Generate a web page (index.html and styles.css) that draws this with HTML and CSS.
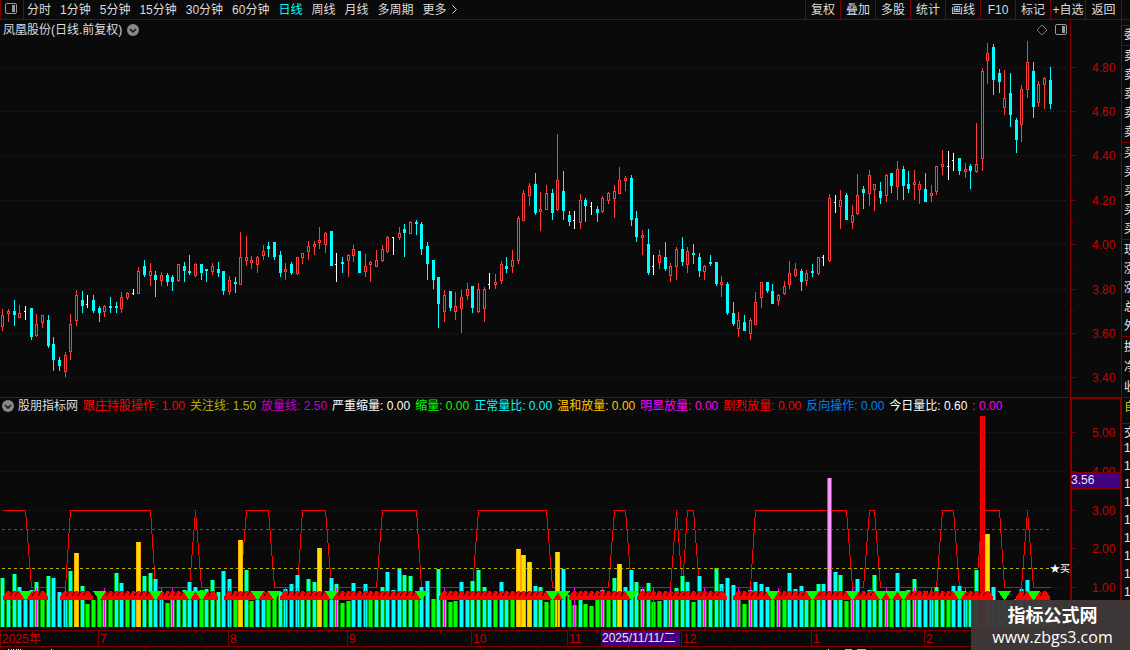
FILE: index.html
```
<!DOCTYPE html>
<html lang="zh-CN">
  <head>
    <meta charset="utf-8">
    <meta name="viewport" content="width=device-width, initial-scale=1">
    <title>凤凰股份</title>
    <link rel="stylesheet" href="styles.css">
  </head>
  <body>
    <header class="toolbar">
      <button class="panel-btn" aria-label="面板">
        <svg width="13" height="11"><rect x="0.5" y="0.5" width="11" height="10" rx="1.5" fill="none" stroke="#999"/><rect x="7" y="2" width="3" height="7" fill="#999"/></svg>
      </button>
      <nav class="periods">
        <button>分时</button>
        <button>1分钟</button>
        <button>5分钟</button>
        <button>15分钟</button>
        <button>30分钟</button>
        <button>60分钟</button>
        <button class="active">日线</button>
        <button>周线</button>
        <button>月线</button>
        <button>多周期</button>
        <button>更多<svg width="7" height="9"><path d="M1.5 0.5 L5.5 4.5 L1.5 8.5" fill="none" stroke="#ddd"/></svg></button>
      </nav>
      <div class="tools">
        <button>复权</button>
        <button>叠加</button>
        <button>多股</button>
        <button>统计</button>
        <button>画线</button>
        <button class="wide">F10</button>
        <button>标记</button>
        <button>+自选</button>
        <button>返回</button>
      </div>
    </header>

    <main>
      <section class="pane">
        <div class="title">
          <span>凤凰股份(日线.前复权)</span>
          <svg class="chev" width="12" height="12"><circle cx="6" cy="6" r="6" fill="#888"/><path d="M3 5 L6 8 L9 5" fill="none" stroke="#111" stroke-width="1.5"/></svg>
          <svg class="pane-icons" width="30" height="12">
            <path d="M5 1 L10 6 L5 11 L0 6 Z" fill="none" stroke="#777"/>
            <rect x="18.5" y="0.5" width="11" height="10" rx="1.5" fill="none" stroke="#999"/>
            <rect x="25" y="2" width="3" height="7" fill="#999"/>
          </svg>
        </div>
        <svg id="kline" class="kline"></svg>
      </section>
      <svg id="priceAxis" class="price-axis"></svg>

      <section class="pane volume">
        <div class="legend">
          <svg class="chev" width="12" height="12"><circle cx="6" cy="6" r="6" fill="#888"/><path d="M3 5 L6 8 L9 5" fill="none" stroke="#111" stroke-width="1.5"/></svg>
          <span>股朋指标网</span>
          <span class="red">跟庄持股操作: 1.00</span>
          <span class="olive">关注线: 1.50</span>
          <span class="purple">放量线: 2.50</span>
          <span class="white">严重缩量: 0.00</span>
          <span class="green">缩量: 0.00</span>
          <span class="cyan">正常量比: 0.00</span>
          <span class="gold">温和放量: 0.00</span>
          <span class="magenta">明显放量: 0.00</span>
          <span class="red">剧烈放量: 0.00</span>
          <span class="blue">反向操作: 0.00</span>
          <span class="white">今日量比: 0.60</span>
          <span class="magenta">: 0.00</span>
        </div>
        <svg id="ratio" class="ratio"></svg>
      </section>
      <svg id="ratioAxis" class="ratio-axis"></svg>

      <svg id="dateAxis" class="date-axis"></svg>

      <aside class="quotes">
        <div class="head"></div>
        <div class="head">委</div>
        <div class="group"><span>卖</span><span>卖</span><span>卖</span><span>卖</span><span>卖</span></div>
        <div class="group"><span>买</span><span>买</span><span>买</span><span>买</span><span>买</span></div>
        <div class="group"><span>现</span><span>涨</span><span>涨</span><span>总</span><span>外</span></div>
        <div class="group short"><span>换</span><span>净</span><span>收</span></div>
        <div class="own">自</div>
        <div class="deal">交</div>
        <div class="ticks"><span>1</span><span>1</span><span>1</span><span>1</span><span>1</span><span>1</span><span>1</span><span>1</span><span>1</span></div>
      </aside>
    </main>

    <div class="watermark">
      <strong>指标公式网</strong>
      <span>www.zbgs3.com</span>
    </div>

    <script src="chart.js"></script>
  </body>
</html>
```
FILE: styles.css
```
* {
  box-sizing: border-box;
}
body {
  margin: 0;
  height: 100vh;
  overflow: hidden;
  position: relative;
  color: #ddd;
  background: #0a0a0a;
  font: 12px/18px "Liberation Sans", "Noto Sans CJK SC", sans-serif;
}
button {
  margin: 0;
  padding: 0;
  border: 0;
  color: inherit;
  background: none;
  font: inherit;
  white-space: nowrap;
  cursor: pointer;
}
svg {
  display: block;
  flex: none;
}
svg text {
  font: 12px "Liberation Sans", "Noto Sans CJK SC", sans-serif;
}

.toolbar {
  display: flex;
  height: 20px;
  padding-right: 8px;
  border-bottom: 1px solid #800000;
}
.panel-btn {
  width: 24px;
  padding-left: 4px;
  padding-bottom: 2px;
  border-left: 1px solid #800000;
  border-right: 1px solid #800000;
}
.periods {
  display: flex;
  gap: 9px;
  padding-left: 3px;
}
.periods button {
  display: flex;
  align-items: center;
  gap: 4px;
}
.periods .active {
  color: #00ffff;
}
.tools {
  display: flex;
  margin-left: auto;
  border-right: 1px solid #800000;
}
.tools button {
  width: 35px;
  border-left: 1px solid #800000;
}
.tools button:last-child {
  width: 36px;
}

main {
  display: grid;
  grid-template-columns: minmax(0, 1fr) 51px 9px;
}
.title {
  display: flex;
  align-items: center;
  gap: 5px;
  height: 19px;
  padding-left: 3px;
}
.pane-icons {
  margin-left: auto;
  margin-right: 3px;
}
.kline {
  width: 100%;
  height: 358px;
}
.price-axis {
  width: 100%;
  height: 377px;
}
.volume {
  border-top: 1px solid #800000;
}
.legend {
  display: flex;
  align-items: center;
  gap: 5px;
  height: 18px;
  padding-left: 2px;
  padding-bottom: 2px;
  line-height: 16px;
  white-space: nowrap;
}
.legend .chev {
  margin-right: -1px;
}
.ratio {
  width: 100%;
  height: 214px;
}
.ratio-axis {
  width: 100%;
  height: 233px;
}
.date-axis {
  grid-column: 1 / 3;
  width: 100%;
  height: 20px;
}

.red { color: #ff0000; }
.olive { color: #b4b400; }
.purple { color: #c800c8; }
.white { color: #ffffff; }
.green { color: #00ff00; }
.cyan { color: #00ffff; }
.gold { color: #ffc800; }
.magenta { color: #ff00ff; }
.blue { color: #0080ff; }

.quotes {
  grid-column: 3;
  grid-row: 1 / 4;
  overflow: hidden;
  border-left: 1px solid #800000;
  color: #e8e8e8;
}
.quotes div {
  padding-left: 2px;
  border-bottom: 1px solid #800000;
}
.quotes .head {
  height: 20px;
}
.quotes .head:first-child {
  height: 6px;
}
.quotes .group {
  display: flex;
  flex-direction: column;
  justify-content: space-around;
  height: 97px;
}
.quotes .short {
  height: 61px;
}
.quotes .own {
  height: 26px;
  color: #c8c800;
}
.quotes .deal {
  height: 22px;
}
.quotes .ticks {
  display: flex;
  flex-direction: column;
  border: 0;
  margin-top: -7px;
}

.watermark {
  position: absolute;
  right: 0;
  bottom: 0;
  width: 159px;
  height: 50px;
  padding: 2px 0 0 4px;
  display: flex;
  flex-direction: column;
  align-items: center;
  color: #fff;
  background: rgba(62, 56, 56, 0.97);
}
.watermark strong {
  font: bold 18px/24px "Noto Sans CJK SC", sans-serif;
}
.watermark span {
  font: 16px/22px "Open Sans", sans-serif;
}
```
FILE: chart.js
```
const LINE = '#800000';
const RED = '#ff3c3c';

// one item per day: kind (r up, c down, w flat), then high, body top, body bottom, low
const candles = `
r309,315,327,331 r309,311,314,322 c300,311,315,326 r305,313,318,318 w306,311,320 c308,308,337,340
r314,324,336,337 r315,315,323,328 c315,320,346,348 c337,344,360,371 c357,360,366,371 r352,355,372,377
r314,324,352,360 r290,295,321,326 c291,300,306,313 w295,304,308 c295,300,311,313 c306,308,313,322
r305,306,312,317 c297,306,308,313 c302,306,308,313 r292,297,309,313 r292,293,298,300 w289,293,295
r267,271,294,294 c260,266,275,277 r263,271,276,286 c271,275,280,297 r272,275,281,286 c273,275,282,286
c275,277,282,291 r264,264,281,282 c262,266,271,282 c255,271,273,275 r263,264,276,277 c264,264,273,280
c269,269,271,282 r263,266,272,275 c262,269,273,277 c271,271,291,295 r276,280,292,295 c277,282,284,293
r232,257,285,285 r236,257,261,266 r256,260,263,269 r256,257,265,273 r245,251,256,260 c242,246,249,257
c242,242,257,260 c251,255,273,277 r263,269,272,280 c262,264,273,275 r257,257,274,275 r253,253,258,264
r241,246,252,260 r241,244,247,255 r227,240,243,249 r232,233,245,253 c231,231,266,266 w253,264,282
c257,262,264,273 r254,255,261,277 r245,249,256,262 c251,251,273,273 r254,266,272,277 r261,262,265,282
r250,260,267,267 r245,249,261,262 r236,237,252,253 w237,237,255 r227,233,238,240 c224,229,233,257
r221,222,234,234 c220,222,224,235 c222,224,249,255 c242,246,264,280 c260,260,280,289 c277,277,304,328
r290,295,312,322 c291,291,308,311 r292,306,312,320 r290,297,309,333 r283,289,296,300 c286,286,308,313
r283,289,312,313 r287,289,309,322 w273,284,289 r274,282,285,289 r261,264,281,284 c257,266,269,273
r250,260,267,273 r216,218,261,264 r190,193,221,221 r183,186,196,206 c173,184,213,215 r192,209,212,231
r185,193,210,210 c189,193,213,220 r134,180,210,211 c171,191,211,220 c211,215,222,226 w211,220,229
r194,200,223,229 c198,200,206,222 w202,206,215 c206,209,213,222 r196,198,212,213 r192,193,201,204
r185,191,199,218 r167,180,194,194 r176,178,181,191 c175,178,220,226 c211,218,237,242 r230,235,238,255
c229,244,273,275 w255,266,275 r250,255,263,269 c242,257,269,271 r263,266,276,282 r247,249,267,280
c237,249,262,266 r247,251,265,273 c244,253,255,264 c253,257,271,277 r265,266,272,280 c255,262,264,266
c262,262,284,286 r276,282,285,297 c282,284,313,315 c302,313,324,326 r312,320,329,337 c315,322,331,331
r318,320,334,340 r292,302,325,325 r282,282,298,308 c282,282,291,293 c284,291,304,304 r294,295,301,306
r281,286,294,295 r261,273,285,289 r263,269,276,277 c269,271,282,291 r270,273,281,286 c264,271,273,277
r257,257,274,275 w255,257,266 r194,198,261,262 w195,202,213 r190,200,207,229 c193,195,220,220
r205,215,223,229 r174,195,214,215 c186,189,193,209 r170,175,194,206 r184,184,190,211 c182,191,198,204
r174,175,196,202 c173,173,186,193 r161,169,187,200 c166,169,186,200 c171,184,189,193 r170,182,185,200
r181,184,190,204 c173,189,202,202 r185,193,196,202 r166,166,192,195 r150,164,167,175 w151,166,180
w153,160,171 c158,158,171,175 r163,169,172,178 c164,166,171,189 r123,164,172,173 r68,71,159,171
r43,53,61,84 c44,47,80,95 c69,73,82,93 r70,98,108,115 c73,93,115,127 c118,120,140,153
r85,89,125,142 r41,62,90,98 c62,71,107,118 r81,84,103,107 r77,78,85,109 c67,80,104,109`
  .trim().split(/\s+/).map(s => [s[0], ...s.slice(1).split(',').map(Number)]);

// c normal, g shrinking, y mild, p obvious, r violent; a trailing m adds the magenta line
const bars = `
c578 c595 c574 c587 c594 c590 c582m g594 c576 c578 c592 c595m
c571 y553 c586 g604 g600 g597 c595m g597 c573 c583 g596 c594
y542 c576 c573 c579 c594m g603 c594m c594 c590 c582 c587 g590
c589 c580 c592 c571 c579m g596 y540 c570 g601 c594 c593 g596
g596 c592 c589m c584 c575m c594 c579 c582 y548 g594 c578 c584m
g603 g601 c583 c593 c584m g596 c596 c587 c572 c590 c568 c575
c576 g597 c587 c581 g599 c569 c592m g602 g601 c582 c594 c581
c570 c587 c594 g597 c582 c594 g597 y549 y555 y562 c586 c587
g602 g597 y552m c569 g595 g605m c594 g604 g606 g599 c590m g597
c578 y564 c587 c570 c582 c589m c583 g602m g601 c593 c594m c588
c576 c582 g602 c576 c594m c595 c568 c584m c578 c585 g597m g604
c590m c582 c584 c587 g595 c595m g595 c573 c589 c586 c595 g594
c584 c584 p478 c572 c575 g601 c595m c579 g595 c590 c575 c595
c595m g595 c573 g595 c590 c579m c594 c591 c594m c587 c595 g596
c586 c586 c594m c595 c570 r416 y534 c587 c601 c601 c601 g599
c589m c580 c601 g601 c601 c601`
  .trim().split(/\s+/);

const barColors = {
  c: ['#00a000', '#00ffff'],
  g: ['#00a000', '#00ff00'],
  y: ['#ffaa00', '#ffdc00'],
  p: ['#ff00ff', '#ff96ff'],
  r: ['#ff0000', '#e60000'],
};

// [first, last] day of each run
const upRuns = [[1, 3], [5, 7], [11, 15], [18, 26], [28, 32], [34, 34], [36, 37], [40, 44], [46, 47], [50, 57],
  [59, 73], [78, 96], [98, 98], [101, 110], [113, 127], [130, 135], [137, 142], [144, 149], [151, 154],
  [156, 156], [158, 158], [160, 168], [170, 174], [180, 181], [183, 184]];
const downMarks = [4, 17, 27, 33, 35, 45, 48, 58, 74, 97, 99, 111, 136, 143, 150, 155, 157, 159, 169, 177, 182];
const holdRuns = [[0, 4], [12, 26], [34, 34], [43, 47], [53, 57], [67, 73], [84, 96], [108, 110], [119, 119],
  [121, 122], [133, 149], [153, 154], [166, 168], [173, 176], [181, 181]];

const priceLines = [67, 111, 155, 200, 244, 289, 333, 377];
const ratioLines = [432, 471, 510, 548, 587];

// position of a 1070px wide layout scaled to the real width
const at = (p, w) => Math.round(p * w / 1070);
const dayX = (i, w) => Math.floor(2.9 + i * (w - 22.7) / 185);

function rect(x, y, w, h, fill, extra = '') {
  return `<rect x="${x}" y="${y}" width="${w}" height="${h}" fill="${fill}" ${extra}/>`;
}
function line(x1, y1, x2, y2, color, extra = '') {
  return `<path d="M${x1} ${y1} L${x2} ${y2}" stroke="${color}" fill="none" ${extra}/>`;
}
function text(x, y, s, fill, extra = '') {
  return `<text x="${x}" y="${y}" fill="${fill}" ${extra}>${s}</text>`;
}
function put(id, top, body) {
  document.getElementById(id).innerHTML =
    `<g shape-rendering="crispEdges" transform="translate(0 ${-top})">${body}</g>`;
}

function drawKline(w) {
  let out = priceLines.map(y => line(1, y + 0.5, w - 3, y + 0.5, '#6e0f0f', 'stroke-dasharray="1 3"')).join('');
  candles.forEach(([kind, hi, a, b, lo], i) => {
    const x = dayX(i, w);
    if (kind === 'w') {
      out += rect(x, hi, 1, b - hi, '#fff') + rect(x - 1, a, 1, 1, '#fff');
    } else if (kind === 'c') {
      out += rect(x, hi, 1, lo - hi, '#00ffff') + rect(x - 1, a, 3, b - a, '#00ffff');
    } else {
      out += rect(x, hi, 1, a - hi, RED) + rect(x, b, 1, lo - b, RED);
      out += rect(x - 1, a, 3, b - a, RED) + rect(x, a + 1, 1, b - a - 2, '#0a0a0a');
    }
  });
  put('kline', 39, out);
}

function drawRatio(w) {
  let out = ratioLines.map(y => line(1, y + 0.5, w - 3, y + 0.5, '#6e0f0f', 'stroke-dasharray="1 3"')).join('');

  let d = '';
  for (let i = 0; i < bars.length; i++) {
    const held = holdRuns.some(([a, b]) => i >= a && i <= b);
    d += `${i ? 'L' : 'M'}${dayX(i, w) + 0.5} ${held ? 510.5 : 587.5} `;
  }
  out += `<path d="${d}" fill="none" stroke="#ff0000"/>`;

  bars.forEach((s, i) => {
    const x = dayX(i, w);
    const top = parseInt(s.slice(1));
    const [edge, core] = barColors[s[0]];
    out += rect(x - 2, top, 5, 627 - top, edge) + rect(x - 1, top, 3, 627 - top, core);
    if (s.endsWith('m')) out += rect(x, 588, 1, 39, '#ff00ff');
  });

  out += line(2, 529.5, w - 20, 529.5, '#c800c8', 'stroke-dasharray="3 3"');
  out += line(2, 568.5, w - 20, 568.5, '#b4b400', 'stroke-dasharray="3 3"');

  // the tall bars stand in front of the dashed lines
  bars.forEach((s, i) => {
    if ('ypr'.includes(s[0])) {
      const x = dayX(i, w), top = parseInt(s.slice(1));
      const [edge, core] = barColors[s[0]];
      out += rect(x - 2, top, 5, 600 - top, edge) + rect(x - 1, top, 3, 600 - top, core);
    }
  });

  upRuns.forEach(([a, b]) => {
    for (let i = a; i <= b; i++) {
      const x = dayX(i, w);
      out += `<path d="M${x - 5} 600 V597 L${x - 1} 591 H${x + 2} L${x + 6} 597 V600 Z" fill="#ff0000"/>`;
      if (i > a) out += line(x - 4, 596, x - 1, 592, '#5a0000');
    }
  });
  downMarks.forEach(i => {
    const x = dayX(i, w);
    out += `<path d="M${x - 6} 591 H${x + 7} L${x + 1} 600 H${x} Z" fill="#00ff00"/>`;
  });

  out += text(w - 20, 572, '★买', '#fff', 'style="font-size:10px"');
  put('ratio', 416, out);
}

function drawAxes() {
  let out = rect(0, 20, 1, 377, LINE);
  priceLines.forEach((y, i) => {
    out += rect(1, y, 5, 1, LINE) + text(22, y + 5, (4.8 - i * 0.2).toFixed(2), '#c80000');
    if (i < 7) out += rect(1, y + 22, 2, 1, LINE);
  });
  put('priceAxis', 20, out);

  out = rect(0, 397, 51, 2, LINE) + rect(0, 397, 2, 233, LINE) + rect(50, 397, 1, 233, LINE);
  ratioLines.forEach((y, i) => {
    out += rect(2, y, 4, 1, LINE) + rect(2, y + 19, 1, 1, LINE);
    out += text(22, y + 5, (5 - i).toFixed(2), '#c80000');
  });
  out += rect(1, 472, 49, 17, LINE) + rect(2, 473, 48, 15, '#400080') + text(1, 484, '3.56', '#e8e8e8');
  put('ratioAxis', 397, out);
}

function drawDates(w) {
  const months = [[98, '7'], [228, '8'], [347, '9'], [471, '10'], [567, '11'], [681, '12'], [811, '1'], [924, '2']];
  const ticks = [131, 163, 196, 258, 288, 317, 378, 409, 440, 495, 519, 543, 596, 714, 746, 839, 868, 896, 944, 964];
  const lower = [0, 42, 73, 115, 144, 177, 207, 238, 282, 308, 332, 364, 390, 422, 480, 508, 536, 568, 599, 628,
    663, 696, 735, 766, 871];
  let out = rect(0, 630, w + 51, 1, LINE) + rect(0, 646, w + 51, 1, LINE) + rect(0, 630, 1, 16, LINE);
  ticks.forEach(p => out += rect(at(p, w), 631, 1, 2, LINE));
  lower.forEach(p => out += rect(at(p, w), 647, 1, 2, LINE));
  out += text(2, 643, '2025年', '#c80000');
  months.forEach(([p, s]) => {
    const x = at(p, w);
    out += rect(x, 631, 1, 15, LINE) + text(x + 2, 643, s, '#c80000');
  });
  out += rect(at(601, w), 631, 79, 15, '#400080') + text(at(602, w), 642, '2025/11/11/二', '#e8e8e8');
  // tops of the next pane's labels
  [8, 11, 13, 16, 18, 20, 51, 828].forEach(p => out += rect(at(p, w), 649, 1, 1, '#e8e8e8'));
  out += rect(at(845, w), 649, 7, 1, '#00ffff') + rect(at(857, w), 649, 9, 1, '#00ffff');
  put('dateAxis', 630, out);
}

function draw() {
  const w = document.getElementById('kline').clientWidth;
  drawKline(w);
  drawRatio(w);
  drawAxes();
  drawDates(w);
}

window.addEventListener('resize', draw);
draw();
```
